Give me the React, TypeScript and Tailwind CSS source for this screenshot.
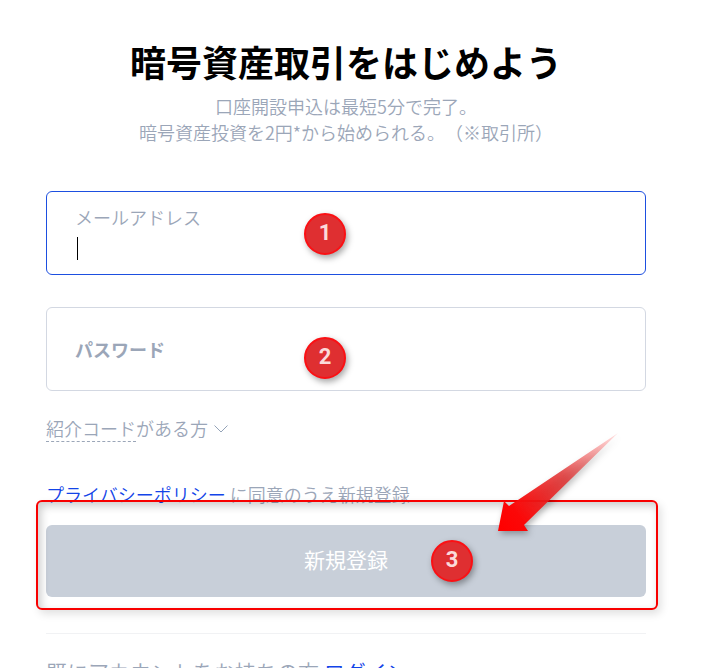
import { useState } from 'react'
import clsx from 'clsx'

type BadgeProps = {
  label: string
  className?: string
}

const Badge = ({ label, className }: BadgeProps) => (
  <span
    className={clsx(
      'pointer-events-none absolute flex size-[42px] items-center justify-center rounded-full border-2 border-[#fb1014] bg-[#df2f31] pb-0.5 font-["Roboto","Liberation_Sans",sans-serif] text-[22px] font-bold text-[#fbdada] shadow-[2px_3px_6px_rgba(0,0,0,0.35)]',
      className
    )}
  >
    {label}
  </span>
)

const Arrow = () => (
  <svg
    className="pointer-events-none absolute -top-[97px] right-[24px] h-[120px] w-[140px] overflow-visible drop-shadow-[2px_3px_3px_rgba(0,0,0,0.3)]"
    viewBox="0 0 140 120"
    aria-hidden="true"
  >
    <defs>
      <linearGradient id="arrow-fade" gradientUnits="userSpaceOnUse" x1="16" y1="97" x2="136" y2="6">
        <stop offset="0" stopColor="#ff0000" />
        <stop offset="0.15" stopColor="#fb0808" />
        <stop offset="0.55" stopColor="#e02a2a" stopOpacity="0.8" />
        <stop offset="1" stopColor="#ff4040" stopOpacity="0.15" />
      </linearGradient>
    </defs>
    <path d="M136 5 L27 78 L22 73 L16 103 L46 103 L42 97 Z" fill="url(#arrow-fade)" />
  </svg>
)

const App = () => {
  const [email, setEmail] = useState('')
  const [password, setPassword] = useState('')

  return (
    <div className='h-screen overflow-hidden bg-white pt-[39px] pr-[61px] pl-[46px] font-["Noto_Sans_CJK_JP",sans-serif] text-lg leading-[26px] font-[350] text-[#9ba6b8] [text-spacing-trim:space-all]'>
      <header className="text-center">
        <h1 className="text-4xl leading-[44px] font-bold whitespace-nowrap text-black">暗号資産取引をはじめよう</h1>
        <p className="mt-[10px]">
          口座開設申込は最短5分で完了。
          <br />
          暗号資産投資を2円*から始められる。（※取引所）
        </p>
      </header>

      <form className="mt-[46px]" onSubmit={(e) => e.preventDefault()}>
        <div className="relative h-[84px] rounded-md border border-[#1d4fe0] px-7 pt-3">
          <label htmlFor="email" className="block">メールアドレス</label>
          <input
            id="email"
            type="email"
            value={email}
            onChange={(e) => setEmail(e.target.value)}
            className="block h-8 w-full bg-transparent text-black caret-transparent outline-none"
          />
          {!email && <span className="pointer-events-none absolute top-[45px] left-[30px] h-[23px] w-px bg-black" />}
          <Badge label="1" className="top-[21px] left-[257px]" />
        </div>

        <div className="relative mt-8 h-[84px] rounded-md border border-[#d3d8e2]">
          <label
            htmlFor="password"
            className={clsx('pointer-events-none absolute left-7 font-bold', password ? 'top-1' : 'top-7')}
          >
            パスワード
          </label>
          <input
            id="password"
            type="password"
            value={password}
            onChange={(e) => setPassword(e.target.value)}
            className="block h-full w-full bg-transparent px-7 text-black outline-none"
          />
          <Badge label="2" className="top-[29px] left-[257px]" />
        </div>

        <button type="button" className="mt-6 flex items-center gap-1.5">
          <span>
            <span className="inline-block border-b border-dashed border-[#9ba6b8]">紹介コード</span>がある方
          </span>
          <svg className="h-2 w-[14px]" viewBox="0 0 14 8" fill="none" stroke="#94a3b8" aria-hidden="true">
            <path d="M0.5 0.5 L7 7 L13.5 0.5" />
          </svg>
        </button>

        <p className="mt-[39px]">
          <a href="#privacy" className="text-[#1244e8]">プライバシーポリシー</a> に同意のうえ新規登録
        </p>

        <div className="relative mt-[18px]">
          <button type="submit" className="block h-[72px] w-full rounded-md bg-[#c8cfd9] pb-1 text-[21px] font-normal text-white">
            新規登録
          </button>
          <div className="pointer-events-none absolute -top-[25px] -right-3 -bottom-[13px] -left-[10px] rounded-md border-2 border-[#f80000] shadow-[3px_4px_8px_rgba(0,0,0,0.12),inset_3px_4px_8px_rgba(0,0,0,0.2)]" />
          <Arrow />
          <Badge label="3" className="top-[15px] left-[385px]" />
        </div>
      </form>

      <footer className="mt-9 border-t border-[#f1f2f4] pt-6 text-[21px] whitespace-nowrap">
        既にアカウントをお持ちの方 <a href="#login" className="text-[#1244e8]">ログイン</a>
      </footer>
    </div>
  )
}

export default App
